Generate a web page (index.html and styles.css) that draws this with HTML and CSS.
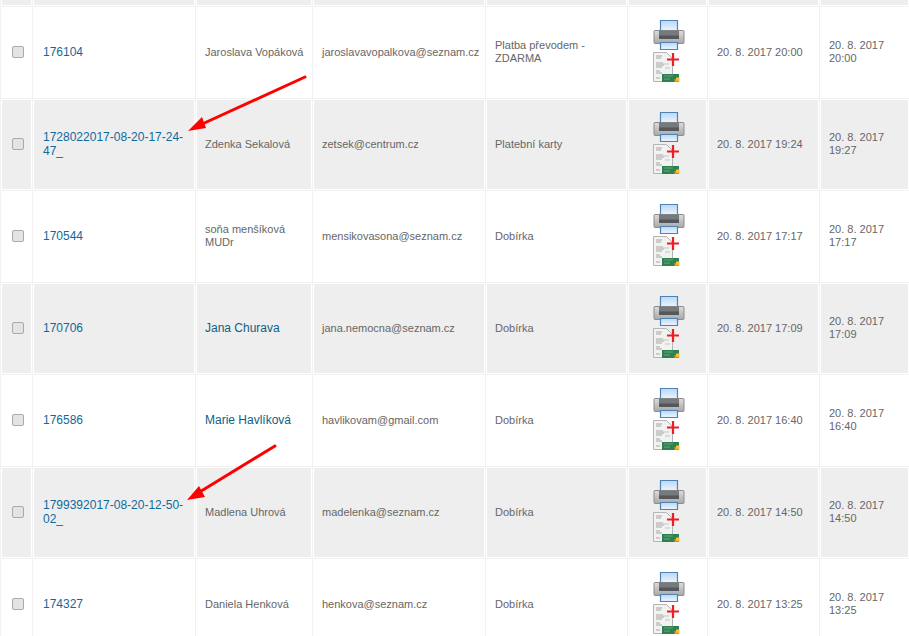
FILE: index.html
```html
<!DOCTYPE html>
<html lang="cs">
<head>
<meta charset="utf-8">
<title>Objednávky</title>
<link rel="stylesheet" href="styles.css">
</head>
<body>
<svg class="defs" width="0" height="0" aria-hidden="true">
  <defs>
    <linearGradient id="screen" x1="0" y1="0" x2="0" y2="1"><stop offset="0" stop-color="#bcd8f5"/><stop offset="1" stop-color="#eef6fd"/></linearGradient>
    <linearGradient id="body" x1="0" y1="0" x2="0" y2="1"><stop offset="0" stop-color="#dcdcdc"/><stop offset="1" stop-color="#a8a8a8"/></linearGradient>
    <symbol id="icons" viewBox="0 0 34 66">
      <path d="M8.500 2.500h17v11h-17z" fill="url(#screen)" stroke="#4d83b5" stroke-width="1.200"/>
      <path d="M3 12.500h28a1 1 0 0 1 1 1v11a1 1 0 0 1-1 1H3a1 1 0 0 1-1-1v-11a1 1 0 0 1 1-1z" fill="url(#body)" stroke="#8d8d8d"/>
      <path d="M7 12.500h20v8H7z" fill="#77797c"/>
      <path d="M7 17.500h20v3.500H7z" fill="#55575a"/>
      <path d="M8.500 24.500h17v7h-17z" fill="url(#screen)" stroke="#4d83b5" stroke-width="1.200"/>
      <path d="M1.500 34.500h13l6 6v23h-19z" fill="#f2f2f0" stroke="#b5b5b5"/>
      <path d="M4 38h6M4 40h5M4 45h7M4 47h8M4 49h6M4 53h4M4 55h6M4 60h4" stroke="#a5a5a5"/>
      <path d="M11 46h6M13 50h5" stroke="#c5c5c5"/>
      <path d="M21 35v13M15 41.500h12" stroke="#ee1c25" stroke-width="2.200"/>
      <path d="M10 56h17v8H10z" fill="#2f8050"/>
      <path d="M12 58h9M12 61h6" stroke="#63a87f"/>
      <path d="M24 59.500h3.500v4H24z" fill="#fbc02d"/>
      <path d="M22.500 61h2v3h-2z" fill="#f5901e"/>
    </symbol>
  </defs>
</svg>
<main class="page">
  <table class="orders">
    <colgroup>
      <col class="c-check"><col class="c-id"><col class="c-name"><col class="c-mail"><col class="c-pay"><col class="c-icons"><col class="c-date"><col class="c-edit">
    </colgroup>
    <tbody>
      <tr class="stub"><td></td><td></td><td></td><td></td><td></td><td></td><td></td><td></td></tr>
      <tr>
        <td class="check"><input type="checkbox" class="box"></td>
        <td class="id-cell"><a class="id" href="#">176104</a></td>
        <td class="name">Jaroslava Vopáková</td>
        <td>jaroslavavopalkova@seznam.cz</td>
        <td>Platba převodem - ZDARMA</td>
        <td class="icons"><svg class="icon"><use href="#icons"/></svg></td>
        <td>20. 8. 2017 20:00</td>
        <td>20. 8. 2017 20:00</td>
      </tr>
      <tr class="alt">
        <td class="check"><input type="checkbox" class="box"></td>
        <td class="id-cell"><a class="id" href="#">1728022017-08-20-17-24-47_</a></td>
        <td class="name">Zdenka Sekalová</td>
        <td>zetsek@centrum.cz</td>
        <td>Platební karty</td>
        <td class="icons"><svg class="icon"><use href="#icons"/></svg></td>
        <td>20. 8. 2017 19:24</td>
        <td>20. 8. 2017 19:27</td>
      </tr>
      <tr>
        <td class="check"><input type="checkbox" class="box"></td>
        <td class="id-cell"><a class="id" href="#">170544</a></td>
        <td class="name">soňa menšíková MUDr</td>
        <td>mensikovasona@seznam.cz</td>
        <td>Dobírka</td>
        <td class="icons"><svg class="icon"><use href="#icons"/></svg></td>
        <td>20. 8. 2017 17:17</td>
        <td>20. 8. 2017 17:17</td>
      </tr>
      <tr class="alt">
        <td class="check"><input type="checkbox" class="box"></td>
        <td class="id-cell"><a class="id" href="#">170706</a></td>
        <td class="name"><a class="person" href="#">Jana Churava</a></td>
        <td>jana.nemocna@seznam.cz</td>
        <td>Dobírka</td>
        <td class="icons"><svg class="icon"><use href="#icons"/></svg></td>
        <td>20. 8. 2017 17:09</td>
        <td>20. 8. 2017 17:09</td>
      </tr>
      <tr>
        <td class="check"><input type="checkbox" class="box"></td>
        <td class="id-cell"><a class="id" href="#">176586</a></td>
        <td class="name"><a class="person" href="#">Marie Havlíková</a></td>
        <td>havlikovam@gmail.com</td>
        <td>Dobírka</td>
        <td class="icons"><svg class="icon"><use href="#icons"/></svg></td>
        <td>20. 8. 2017 16:40</td>
        <td>20. 8. 2017 16:40</td>
      </tr>
      <tr class="alt">
        <td class="check"><input type="checkbox" class="box"></td>
        <td class="id-cell"><a class="id" href="#">1799392017-08-20-12-50-02_</a></td>
        <td class="name">Madlena Uhrová</td>
        <td>madelenka@seznam.cz</td>
        <td>Dobírka</td>
        <td class="icons"><svg class="icon"><use href="#icons"/></svg></td>
        <td>20. 8. 2017 14:50</td>
        <td>20. 8. 2017 14:50</td>
      </tr>
      <tr>
        <td class="check"><input type="checkbox" class="box"></td>
        <td class="id-cell"><a class="id" href="#">174327</a></td>
        <td class="name">Daniela Henková</td>
        <td>henkova@seznam.cz</td>
        <td>Dobírka</td>
        <td class="icons"><svg class="icon"><use href="#icons"/></svg></td>
        <td>20. 8. 2017 13:25</td>
        <td>20. 8. 2017 13:25</td>
      </tr>
    </tbody>
  </table>
  <svg class="arrows" viewBox="0 0 909 636" aria-hidden="true">
    <path class="shaft" d="M305 77 L200 125"/>
    <path class="head" d="M188 131 L202 117 L206 128z"/>
    <path class="shaft" d="M275 446 L198 493"/>
    <path class="head" d="M187 500 L199 486 L205 497z"/>
  </svg>
</main>
</body>
</html>
```
FILE: styles.css
```css
html, body {
  margin: 0;
  padding: 0;
  height: 636px;
  overflow: hidden;
  background: #fff;
}

.defs {
  position: absolute;
}

.page {
  position: relative;
  width: 909px;
  height: 636px;
  overflow: hidden;
}

.orders {
  width: 909px;
  table-layout: fixed;
  border-collapse: collapse;
  font-family: "Liberation Sans", Arial, sans-serif;
  font-size: 11px;
  line-height: 13px;
  color: #666;
}

.c-check { width: 32px; }
.c-id { width: 163px; }
.c-name { width: 117px; }
.c-mail { width: 173px; }
.c-pay { width: 142px; }
.c-icons { width: 80px; }
.c-date { width: 112px; }
.c-edit { width: 90px; }

.orders td {
  height: 91px;
  padding: 0 9px;
  border: 1px solid #f2f2f2;
  vertical-align: middle;
  box-sizing: border-box;
}

.orders tr {
  height: 92px;
}

.orders .stub {
  height: 6px;
}

.orders .stub td {
  height: 6px;
  border-top: 0;
  padding: 0;
  background: #eee;
  box-shadow: inset 1px 0 0 #fff, inset -1px 0 0 #fff, inset 0 -1px 0 #fff;
}

.alt td {
  background: #eee;
  box-shadow: inset 0 0 0 1px #fff;
}

.orders .name {
  padding-right: 6px;
}

.orders .id-cell {
  padding-left: 10px;
  line-height: 14px;
}

.id {
  font-size: 12px;
  color: #0f6a9c;
  text-decoration: none;
}

.person {
  font-size: 12px;
  color: #0d5f87;
  text-decoration: none;
}

.orders .check {
  padding: 0;
  text-align: center;
}

.box {
  appearance: none;
  display: block;
  width: 12px;
  height: 12px;
  margin: 0 0 0 11px;
  border: 1px solid #aaa;
  border-radius: 2px;
  background: #e4e4e4;
  box-sizing: border-box;
}

.orders .icons {
  padding: 0 0 2px 24px;
}

.icon {
  display: block;
  width: 34px;
  height: 66px;
}

.arrows {
  position: absolute;
  left: 0;
  top: 0;
  width: 909px;
  height: 636px;
  pointer-events: none;
}

.shaft {
  fill: none;
  stroke: #f00;
  stroke-width: 3;
  stroke-linecap: round;
}

.head {
  fill: #f00;
}
```
